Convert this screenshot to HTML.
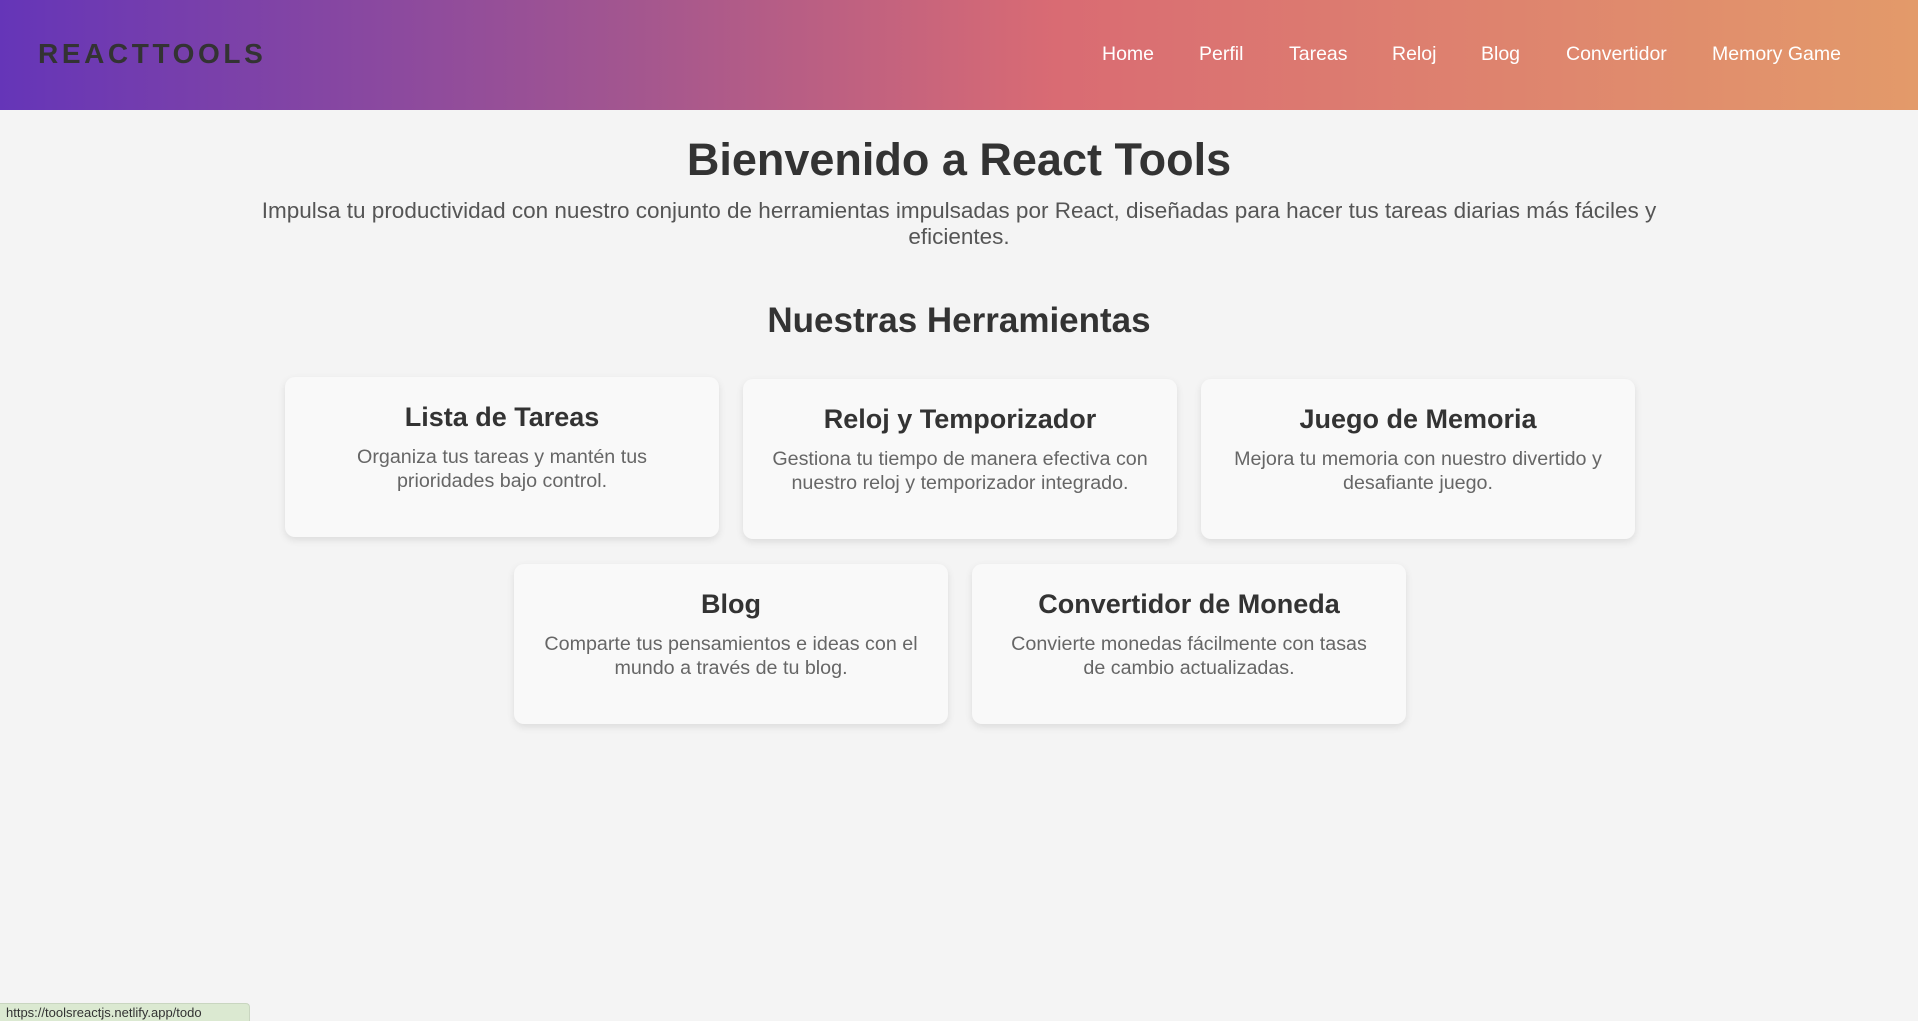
<!DOCTYPE html>
<html><head><meta charset="utf-8"><style>
*{margin:0;padding:0;box-sizing:border-box}
body{width:1918px;height:1021px;background:#f4f4f4;font-family:"Liberation Sans",Arial,sans-serif;position:relative;overflow:hidden;color:#333}
header{position:absolute;left:0;top:0;width:1918px;height:110px;background:linear-gradient(90deg,#6535b8 0%,#a3568f 33%,#d96b73 55%,#e39a6a 100%)}
.logo{position:absolute;left:38px;top:38px;font-size:28px;font-weight:bold;letter-spacing:3.6px;color:#333;line-height:32px}
.nav a{position:absolute;top:42px;color:#fff;font-size:19.5px;line-height:24px;text-decoration:none;white-space:nowrap}
h1{position:absolute;left:0;width:1918px;top:132px;text-align:center;font-size:45px;line-height:56px;color:#333}
.sub{position:absolute;left:254px;width:1410px;top:198px;text-align:center;font-size:22.5px;line-height:26px;color:#555}
h2{position:absolute;left:0;width:1918px;top:300px;text-align:center;font-size:35px;line-height:42px;color:#333}
.card{position:absolute;width:434px;height:160px;background:#f9f9f9;border-radius:10px;box-shadow:0 3px 8px rgba(0,0,0,0.1);padding:24px 22px;text-align:center}
.card h3{font-size:27px;line-height:32px;color:#333;margin-bottom:13px}
.card p{font-size:19.7px;line-height:23.5px;color:#666}
.status{position:absolute;left:0;top:1003px;width:250px;height:18px;background:#dbe9d1;border:1px solid #c9d6c0;border-left:none;border-bottom:none;border-radius:0 4px 0 0;font-size:13px;line-height:18px;padding-left:6px;color:#333;overflow:hidden;white-space:nowrap}
</style></head><body>
<header>
<div class="logo">REACTTOOLS</div>
<div class="nav">
<a style="left:1102px">Home</a>
<a style="left:1199px">Perfil</a>
<a style="left:1289px">Tareas</a>
<a style="left:1392px">Reloj</a>
<a style="left:1481px">Blog</a>
<a style="left:1566px">Convertidor</a>
<a style="left:1712px">Memory Game</a>
</div>
</header>
<h1>Bienvenido a React Tools</h1>
<div class="sub">Impulsa tu productividad con nuestro conjunto de herramientas impulsadas por React, diseñadas para hacer tus tareas diarias más fáciles y eficientes.</div>
<h2>Nuestras Herramientas</h2>
<div class="card" style="left:285px;top:377px;padding:24px 36px"><h3>Lista de Tareas</h3><p>Organiza tus tareas y mantén tus prioridades bajo control.</p></div>
<div class="card" style="left:743px;top:379px"><h3>Reloj y Temporizador</h3><p>Gestiona tu tiempo de manera efectiva con nuestro reloj y temporizador integrado.</p></div>
<div class="card" style="left:1201px;top:379px"><h3>Juego de Memoria</h3><p>Mejora tu memoria con nuestro divertido y desafiante juego.</p></div>
<div class="card" style="left:514px;top:564px"><h3>Blog</h3><p>Comparte tus pensamientos e ideas con el mundo a través de tu blog.</p></div>
<div class="card" style="left:972px;top:564px;padding:24px 34px"><h3>Convertidor de Moneda</h3><p>Convierte monedas fácilmente con tasas de cambio actualizadas.</p></div>
<div class="status">https://toolsreactjs.netlify.app/todo</div>
</body></html>
